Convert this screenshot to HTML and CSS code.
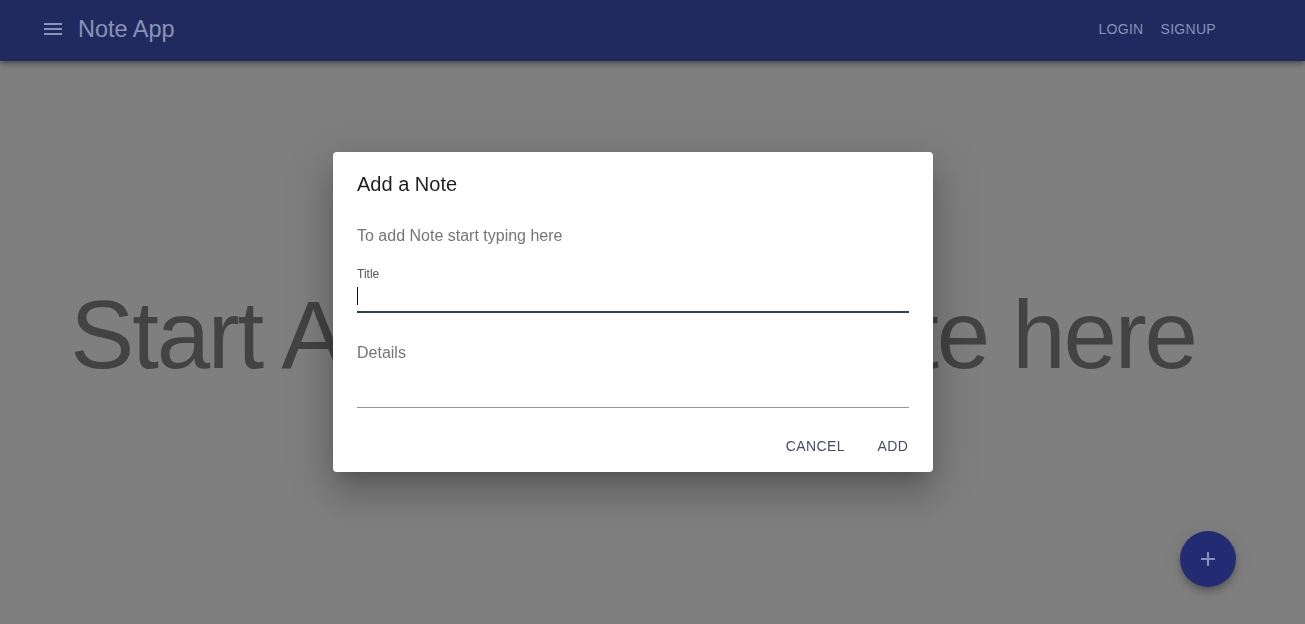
FILE: index.html
```html
<!DOCTYPE html>
<html lang="en">
<head>
<meta charset="utf-8">
<title>Note App</title>
<link rel="stylesheet" href="styles.css">
</head>
<body>
<header class="appbar">
  <div class="toolbar">
    <button class="icon-btn" aria-label="menu">
      <svg viewBox="0 0 24 24" width="24" height="24"><path d="M3 18h18v-2H3v2zm0-5h18v-2H3v2zm0-7v2h18V6H3z" fill="currentColor"/></svg>
    </button>
    <div class="brand">Note App</div>
    <nav class="nav">
      <button class="nav-btn">Login</button>
      <button class="nav-btn">Signup</button>
    </nav>
  </div>
</header>

<main class="main">
  <h1 class="hero">Start Adding your Note here</h1>
</main>

<button class="fab" aria-label="add">
  <svg viewBox="0 0 24 24" width="24" height="24"><path d="M19 13h-6v6h-2v-6H5v-2h6V5h2v6h6v2z" fill="currentColor"/></svg>
</button>

<div class="modal">
  <div class="dialog" role="dialog">
    <h2 class="dialog-title">Add a Note</h2>
    <div class="dialog-content">
      <p class="dialog-text">To add Note start typing here</p>
      <div class="field field-title">
        <label class="field-label shrink">Title</label>
        <div class="field-input focused"><span class="caret"></span></div>
      </div>
      <div class="field field-details">
        <label class="field-label">Details</label>
        <div class="field-input multiline"></div>
      </div>
    </div>
    <div class="dialog-actions">
      <button class="text-btn">Cancel</button>
      <button class="text-btn">Add</button>
    </div>
  </div>
</div>
</body>
</html>
```

FILE: styles.css
```css
* { box-sizing: border-box; }

html, body {
  margin: 0;
  padding: 0;
  height: 100%;
}

body {
  background: #7f7f7f;
  font-family: "Liberation Sans", Arial, sans-serif;
  overflow: hidden;
}

button {
  font-family: inherit;
  border: 0;
  background: none;
  cursor: pointer;
  padding: 0;
}

.appbar {
  background: #212a5f;
  color: #8a92b6;
  height: 61px;
  box-shadow: 0 2px 4px -1px rgba(0,0,0,0.25), 0 4px 5px 0 rgba(0,0,0,0.16), 0 1px 10px 0 rgba(0,0,0,0.1);
  position: relative;
  z-index: 1;
}

.toolbar {
  height: 100%;
  display: flex;
  align-items: center;
  padding: 0 81px 0 41px;
}

.icon-btn {
  color: #8a92b6;
  width: 24px;
  height: 24px;
  display: flex;
  margin-bottom: 4px;
}

.brand {
  margin-left: 13px;
  margin-bottom: 2px;
  font-size: 23.5px;
  line-height: 1;
  color: #8a92b6;
}

.nav {
  margin-left: auto;
  margin-bottom: 2px;
  display: flex;
  gap: 1px;
}

.nav-btn {
  color: #8a92b6;
  font-size: 14px;
  text-transform: uppercase;
  letter-spacing: 0.3px;
  padding: 6px 8px;
  line-height: 1.75;
}

.main {
  margin-right: 39px;
  padding-top: 218px;
  text-align: center;
}

.hero {
  margin: 0;
  font-size: 96px;
  font-weight: 400;
  line-height: 112px;
  letter-spacing: -2.2px;
  color: #434343;
  white-space: nowrap;
}

.fab {
  position: fixed;
  right: 69px;
  bottom: 37px;
  width: 56px;
  height: 56px;
  border-radius: 50%;
  background: #232c72;
  color: #8a92b6;
  display: flex;
  align-items: center;
  justify-content: center;
  box-shadow: 0 3px 5px -1px rgba(0,0,0,0.2), 0 6px 10px 0 rgba(0,0,0,0.14), 0 1px 18px 0 rgba(0,0,0,0.12);
}

.modal {
  position: fixed;
  top: 0;
  left: 0;
  bottom: 0;
  right: 39px;
  display: flex;
  align-items: center;
  justify-content: center;
  z-index: 5;
}

.dialog {
  width: 600px;
  height: 320px;
  background: #fff;
  border-radius: 4px;
  display: flex;
  flex-direction: column;
  box-shadow: 0 11px 15px -7px rgba(0,0,0,0.2), 0 24px 38px 3px rgba(0,0,0,0.14), 0 9px 46px 8px rgba(0,0,0,0.12);
}

.dialog-title {
  margin: 0;
  padding: 16px 24px;
  font-size: 20px;
  font-weight: 400;
  line-height: 32px;
  color: #1f1f1f;
}

.dialog-content {
  padding: 8px 24px;
  flex: 1;
}

.dialog-text {
  margin: 0 0 17px;
  font-size: 16px;
  line-height: 24px;
  color: #757575;
}

.field {
  display: flex;
  flex-direction: column;
}

.field-title { margin: 0 0 8px; }
.field-details { margin: 0 0 4px; }

.field-label {
  display: block;
  font-size: 16px;
  line-height: 16px;
  color: #767676;
  margin-top: 24px;
}

.field-label.shrink {
  font-size: 12px;
  line-height: 16px;
  color: #555;
  margin-top: 0;
  padding-top: 1px;
  height: 16px;
}

.field-input {
  height: 32px;
  border-bottom: 1px solid #949494;
  position: relative;
}

.field-input.focused {
  border-bottom: 2px solid #33405e;
}

.field-input.multiline {
  height: 47px;
}

.caret {
  position: absolute;
  left: 0;
  top: 6px;
  width: 1px;
  height: 18px;
  background: #111;
}

.dialog-actions {
  display: flex;
  justify-content: flex-end;
  align-items: center;
  gap: 8px;
  padding: 8px;
}

.text-btn {
  min-width: 64px;
  padding: 6px 8px;
  font-size: 14px;
  line-height: 24px;
  letter-spacing: 0.4px;
  text-transform: uppercase;
  color: #474b6b;
  text-align: center;
}
```
